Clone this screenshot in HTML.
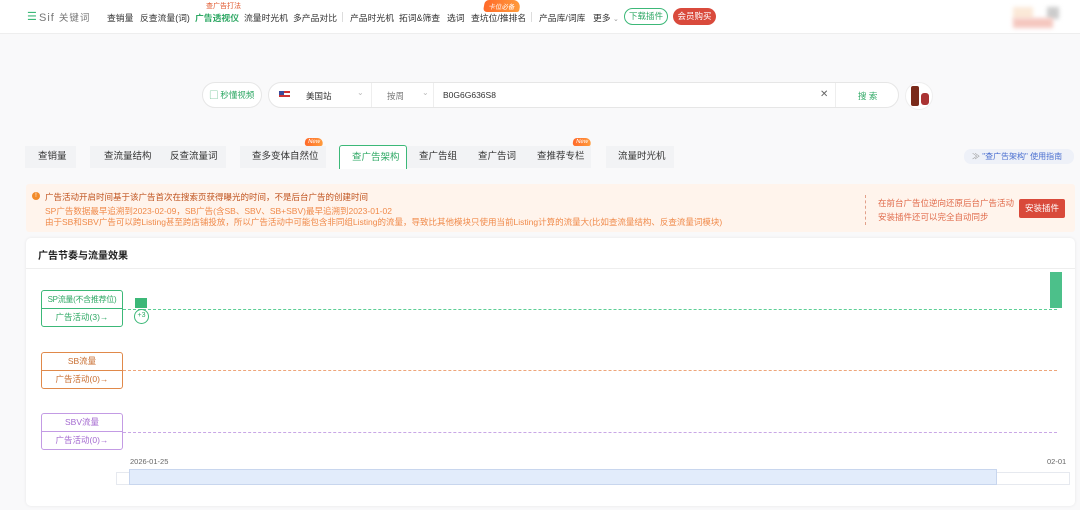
<!DOCTYPE html>
<html><head><meta charset="utf-8"><style>
*{box-sizing:border-box;margin:0;padding:0}
body{width:1080px;height:510px;overflow:hidden;background:#f9f9fa;font-family:"Liberation Sans","Noto Sans CJK SC",sans-serif;font-size:10px;color:#333;position:relative}
.a{position:absolute}
.nav{left:0;top:0;width:1080px;height:34px;background:#fff;border-bottom:1px solid #eee}
.ni{top:11px;font-size:8.8px;color:#333;white-space:nowrap}
.tab{top:146px;height:22px;background:#f2f3f5;font-size:9.5px;line-height:22px;color:#333}
.tab span{position:absolute;top:0}
.box{left:41px;width:82px;height:37px;border:1px solid;border-radius:3px;background:#fff;font-size:8.5px;text-align:center;white-space:nowrap;overflow:hidden}
.box div{height:18px;line-height:17px}
.box div:first-child{border-bottom:1px solid}
.dl{left:123px;width:934px;height:0;border-top:1px dashed}
.new{font-size:6px;color:#fff;background:linear-gradient(90deg,#ff6a2a,#ff9b3b);border-radius:4px 8px 2px 4px;padding:1px 3px;transform:skewX(-10deg)}
</style></head><body>
<div class="a nav"></div>
<div class="a" style="left:27px;top:10px;font-size:11px;color:#3cb878">☰</div>
<div class="a" style="left:39px;top:10px;font-size:11px;color:#777;letter-spacing:1px">Sif <span style="font-size:9.5px">关键词</span></div>
<div class="a ni" style="left:107px">查销量</div>
<div class="a ni" style="left:140px">反查流量(词)</div>
<div class="a ni" style="left:195px;color:#2ea864;font-weight:bold">广告透视仪</div>
<div class="a" style="left:206px;top:1px;font-size:7px;color:#e0562b">查广告打法</div>
<div class="a ni" style="left:244px">流量时光机</div>
<div class="a ni" style="left:293px">多产品对比</div>
<div class="a" style="left:342px;top:12px;width:1px;height:10px;background:#ddd"></div>
<div class="a ni" style="left:350px">产品时光机</div>
<div class="a ni" style="left:399px">拓词&amp;筛查</div>
<div class="a ni" style="left:447px">选词</div>
<div class="a ni" style="left:471px">查坑位/推排名</div>
<div class="a new" style="left:484px;top:0px;font-size:6.5px;padding:1px 5px">卡位必备</div>
<div class="a" style="left:531px;top:12px;width:1px;height:10px;background:#ddd"></div>
<div class="a ni" style="left:539px">产品库/词库</div>
<div class="a ni" style="left:593px">更多 <span style="font-size:7px;color:#999">⌄</span></div>
<div class="a" style="left:624px;top:8px;width:44px;height:17px;border:1px solid #3cb878;border-radius:9px;color:#2ea864;font-size:8.5px;line-height:15px;text-align:center">下载插件</div>
<div class="a" style="left:673px;top:8px;width:43px;height:17px;background:#d94a3c;border-radius:9px;color:#fff;font-size:8.5px;line-height:17px;text-align:center">会员购买</div>
<div class="a" style="left:1013px;top:7px;width:20px;height:12px;background:#fbe9d8;filter:blur(2px)"></div>
<div class="a" style="left:1047px;top:7px;width:12px;height:12px;background:#ccc;filter:blur(2px)"></div>
<div class="a" style="left:1013px;top:18px;width:40px;height:10px;background:#f5c8c0;filter:blur(2px)"></div>

<div class="a" style="left:202px;top:82px;width:60px;height:26px;background:#fff;border:1px solid #e6e6e6;border-radius:13px;color:#2ea864;font-size:8.5px;line-height:24px;text-align:center">▢ 秒懂视频</div>
<div class="a" style="left:268px;top:82px;width:631px;height:26px;background:#fff;border:1px solid #e6e6e6;border-radius:13px"></div>
<div class="a" style="left:279px;top:91px;width:11px;height:8px;background:linear-gradient(#c33 0 25%,#fff 25% 50%,#c33 50% 75%,#fff 75%)"><div style="width:5px;height:4px;background:#3a4a9a"></div></div>
<div class="a" style="left:306px;top:90px;font-size:8.5px">美国站</div>
<div class="a" style="left:357px;top:88px;font-size:8px;color:#bbb">⌄</div>
<div class="a" style="left:371px;top:83px;width:1px;height:24px;background:#eee"></div>
<div class="a" style="left:387px;top:90px;font-size:8.5px;color:#777">按周</div>
<div class="a" style="left:422px;top:88px;font-size:8px;color:#bbb">⌄</div>
<div class="a" style="left:433px;top:83px;width:1px;height:24px;background:#eee"></div>
<div class="a" style="left:443px;top:90px;font-size:8.5px">B0G6G636S8</div>
<div class="a" style="left:820px;top:89px;font-size:10px;color:#666">✕</div>
<div class="a" style="left:835px;top:83px;width:1px;height:24px;background:#eee"></div>
<div class="a" style="left:858px;top:90px;font-size:8.5px;color:#2ea864">搜 索</div>
<div class="a" style="left:905px;top:82px;width:28px;height:28px;border-radius:14px;background:#fff;border:1px solid #eee"></div>
<div class="a" style="left:911px;top:86px;width:8px;height:20px;background:#7a2a1a;border-radius:2px"></div>
<div class="a" style="left:921px;top:93px;width:8px;height:12px;background:#a33;border-radius:3px"></div>

<div class="a tab" style="left:25px;width:51px"><span style="left:13px">查销量</span></div>
<div class="a tab" style="left:90px;width:136px"><span style="left:14px">查流量结构</span><span style="left:80px">反查流量词</span></div>
<div class="a tab" style="left:240px;width:86px"><span style="left:12px">查多变体自然位</span></div>
<div class="a new" style="left:305px;top:138px">New</div>
<div class="a tab" style="left:339px;width:68px;background:#fff;border:1px solid #3cb878;border-bottom:none;border-radius:3px 3px 0 0;color:#2ea864;top:145px;height:24px"><span style="left:12px;top:1px">查广告架构</span></div>
<div class="a tab" style="left:407px;width:184px"><span style="left:12px">查广告组</span><span style="left:71px">查广告词</span><span style="left:130px">查推荐专栏</span></div>
<div class="a new" style="left:573px;top:138px">New</div>
<div class="a tab" style="left:606px;width:68px"><span style="left:12px">流量时光机</span></div>
<div class="a" style="left:964px;top:149px;width:110px;height:15px;background:#eef1f8;border-radius:7px;font-size:8px;color:#4a6fd0;line-height:15px;padding-left:8px"><span style="color:#999">≫</span> "查广告架构" 使用指南</div>

<div class="a" style="left:26px;top:184px;width:1049px;height:48px;background:#fff4ec;border-radius:3px"></div>
<div class="a" style="left:32px;top:192px;width:8px;height:8px;border-radius:4px;background:#f28b2a;color:#fff;font-size:6px;text-align:center;line-height:8px">!</div>
<div class="a" style="left:45px;top:191px;font-size:8.5px;color:#c0531e">广告活动开启时间基于该广告首次在搜索页获得曝光的时间，不是后台广告的创建时间</div>
<div class="a" style="left:45px;top:205px;font-size:8.5px;color:#f08a4a">SP广告数据最早追溯到2023-02-09，SB广告(含SB、SBV、SB+SBV)最早追溯到2023-01-02</div>
<div class="a" style="left:45px;top:216px;font-size:8.5px;color:#f08a4a;white-space:nowrap">由于SB和SBV广告可以跨Listing甚至跨店铺投放，所以广告活动中可能包含非同组Listing的流量，导致比其他模块只使用当前Listing计算的流量大(比如查流量结构、反查流量词模块)</div>
<div class="a" style="left:865px;top:195px;height:30px;border-left:1px dashed #e2a08a"></div>
<div class="a" style="left:878px;top:196px;font-size:8.5px;color:#e06a4a;line-height:14px">在前台广告位逆向还原后台广告活动<br>安装插件还可以完全自动同步</div>
<div class="a" style="left:1019px;top:199px;width:46px;height:19px;background:#d9493a;border-radius:2px;color:#fff;font-size:8.5px;line-height:19px;text-align:center">安装插件</div>

<div class="a" style="left:26px;top:238px;width:1049px;height:268px;background:#fff;border-radius:5px;box-shadow:0 0 3px rgba(0,0,0,.08)"></div>
<div class="a" style="left:38px;top:247px;font-size:10px;font-weight:bold;color:#222">广告节奏与流量效果</div>
<div class="a" style="left:26px;top:268px;width:1049px;height:1px;background:#eee"></div>

<div class="a dl" style="top:309px;border-color:#5ccf95"></div>
<div class="a box" style="top:290px;border-color:#3cb878;color:#2ea864"><div style="border-color:#3cb878;font-size:8px;letter-spacing:-0.3px">SP流量(不含推荐位)</div><div>广告活动(3)→</div></div>
<div class="a" style="left:135px;top:298px;width:12px;height:10px;background:#3cb878"></div>
<div class="a" style="left:134px;top:309px;width:15px;height:15px;border:1.5px solid #3cb878;border-radius:8px;background:#fff;font-size:7px;color:#2ea864;text-align:center;line-height:12px">+3</div>
<div class="a" style="left:1050px;top:272px;width:12px;height:36px;background:#4cc08a"></div>

<div class="a dl" style="top:370px;border-color:#eea57a"></div>
<div class="a box" style="top:352px;border-color:#e0894a;color:#c86d2f"><div style="border-color:#e0894a">SB流量</div><div>广告活动(0)→</div></div>

<div class="a dl" style="top:432px;border-color:#c9a7e6"></div>
<div class="a box" style="top:413px;border-color:#c39be4;color:#a46ad0"><div style="border-color:#c39be4">SBV流量</div><div>广告活动(0)→</div></div>

<div class="a" style="left:130px;top:457px;font-size:7.5px;color:#666">2026-01-25</div>
<div class="a" style="left:1047px;top:457px;font-size:7.5px;color:#666">02-01</div>
<div class="a" style="left:116px;top:472px;width:954px;height:13px;border:1px solid #e6e9ef;background:#fff"></div>
<div class="a" style="left:129px;top:469px;width:868px;height:16px;background:#e2ecfb;border:1px solid #c8d6ee"></div>
</body></html>
